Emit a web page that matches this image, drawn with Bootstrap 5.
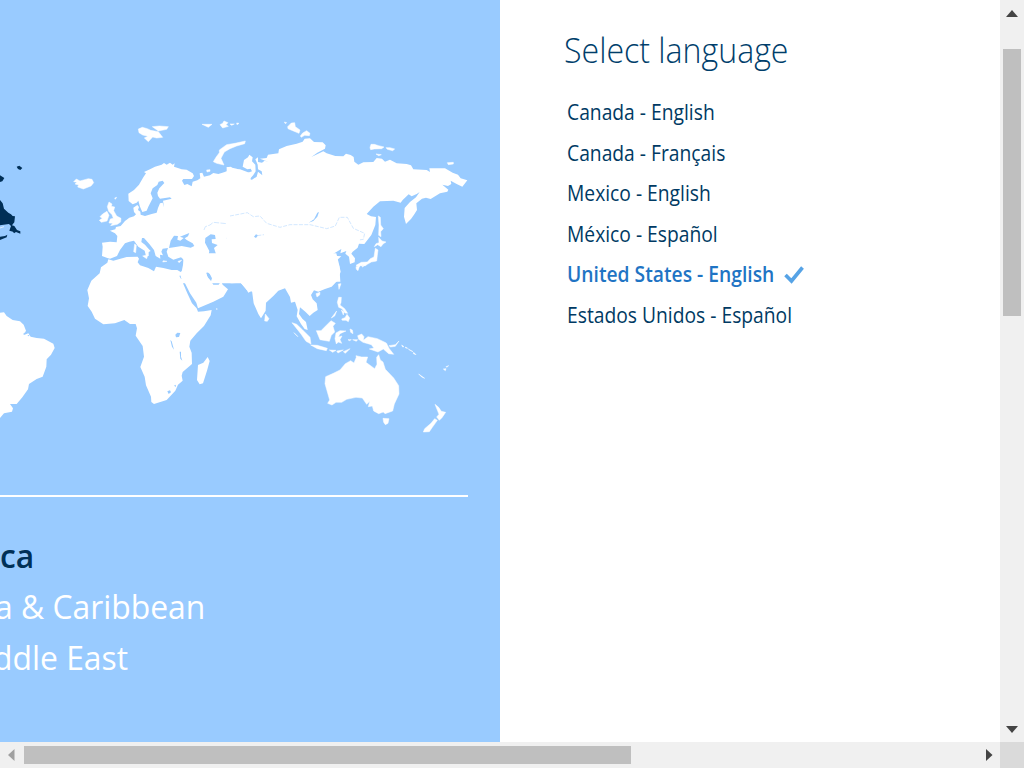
<!DOCTYPE html>
<html lang="en">
<head>
<meta charset="utf-8">
<meta name="viewport" content="width=device-width, initial-scale=1">
<title>Select language</title>
<link href="https://cdn.jsdelivr.net/npm/bootstrap@5.3.0/dist/css/bootstrap.min.css" rel="stylesheet">
<style>
body{font-family:"Open Sans","Noto Sans",sans-serif;color:#003057;height:768px;width:1024px}
.region-pane{width:500px;background:#99cbff;padding-top:110px}
.world-map{width:500px;height:330px}
.rule-line{width:468px;height:2px;background:#fff;margin-top:55px}
.region-list{margin-top:33px;font-size:33px;line-height:51px;color:#fff;white-space:nowrap}
.region-list li{height:51px}
.region-list .fit{transform:scaleX(.965)}
.r1{color:#003057}
.r2{margin-left:-5.3px}
.r3{margin-left:-7px}
.fit{display:inline-block;transform-origin:0 50%;white-space:nowrap}
.lang-pane{padding:25px 0 0 64px}
.lang-title{font-size:35.5px;font-weight:300;line-height:48px;color:#003e6b}
.lang-title .fit{transform:scaleX(.904)}
.lang-list{margin:19px 0 0 2.7px;font-size:21px;line-height:40.6px;color:#003a63}
.lang-list li{height:40.6px}
.lang-list .fit{transform:scaleX(.917)}
.lang-list .chosen{color:#1f74c4;font-weight:600}
.check-mark{margin-left:-9px}
.vbar{width:24px;background:#f0f0f0}
.hbar{height:26px;background:#f0f0f0}
.vthumb{width:18px;height:267px;background:#bfbfbf}
.hthumb{width:607px;height:18px;background:#bfbfbf}
.corner{width:24px;background:#dadada}
</style>
</head>
<body class="d-flex flex-column overflow-hidden">
<div class="d-flex flex-grow-1 overflow-hidden">
 <section class="region-pane overflow-hidden flex-shrink-0">
  <svg class="world-map d-block" viewBox="0 0 500 330" fill="#fff" aria-hidden="true">
   <!-- Europe and the north Atlantic -->
   <g transform="scale(.33333)">
    <path d="M306 398L330 395 350 397 352 378 345 370 330 362 346 358 348 351 362 348 375 333 388 323 402 319 408 313 402 306 400 293 412 285 417 291 414 300 421 305 422 314 435 318 455 312 470 308 474 294 480 280 488 278 492 292 489 272 515 266 510 262 480 266 474 258 472 248 478 235 493 219 488 212 476 215 472 225 458 235 452 250 458 265 445 290 440 302 427 306 420 290 415 272 410 278 398 283 386 273 385 251 402 240 417 224 430 202 438 190 432 186 450 178 465 170 485 164 492 159 500 164 510 158 518 164 524 160 522 170 545 178 560 179 578 190 582 198 576 207 550 207 546 212 553 225 562 222 575 229 578 215 592 211 601 205 599 190 607 188 612 200 630 196 640 189 655 192 672 187 684 182 680 172 692 170 702 178 720 178 752 190V520H538L552 450 543 442 520 449 505 440 500 425 504 414 488 416 484 425 489 436 480 434 481 446 467 438 462 420 448 402 432 384 426 384 424 396 435 404 444 415 452 423 446 426 446 438 438 438 434 422 415 410 402 392 388 395 375 400 360 420 351 438 330 446 322 444 306 438 308 410Z"/>
    <path stroke="#fff" stroke-width="1.500" d="M327 276L336 282 334 289 344 291 341 302 350 318 363 325 362 336 352 343 332 347 338 340 327 339 331 327 340 325 336 314 326 304 322 290ZM308 312L321 304 327 316 321 333 304 337 298 331 307 325 300 320ZM221 215L229 207 240 213 265 206 276 208 281 218 273 228 250 237 233 231 236 225 225 222 231 217ZM415 57L427 52 442 56 452 61 475 65 488 82 470 84 458 81 445 95 433 84 444 79 428 75 417 68ZM457 50L478 48 505 50 500 58 475 63ZM606 43H636L625 52ZM660 44L668 40 672 33 684 38 678 44 685 49 668 54ZM690 42H703L695 46ZM710 39L717 40 711 44ZM640 155L648 142 658 128 658 120 680 104 705 100 736 93 734 101 710 108 690 116 673 126 663 145 672 165 650 160ZM620 180L630 179 630 184 621 186ZM404 402L409 406 407 428 401 425ZM428 438L444 434 440 446ZM490 452L501 454 488 456ZM534 454L545 451 537 458ZM344 264L350 262 346 268Z"/>
    <g fill="#99cbff"><path d="M507 414L512 392 522 377 534 378 532 389 541 392 551 384 540 380 568 369 564 379 554 385 560 390 578 400 583 408 572 413 545 408 522 412ZM616 384L632 373 645 375 647 387 635 388 636 399 653 405 642 414 650 438 640 446 625 438 628 423 615 398ZM680 384L687 378 691 387 683 393ZM618 488L627 487 636 505 633 514 624 505ZM527 487L533 488 545 506 538 504ZM370 422L377 423 374 427ZM550 498L552 486 554 497Z"/><path fill="none" stroke="#bcdcff" stroke-width="2" stroke-dasharray="16 4" d="M612 360L616 350 630 345 640 337 690 342 697 318 710 322 750 306M660 434L676 437 700 450"/></g>
    <g fill="#002f57"><path d="M0 270L8 280 12 296 25 308 33 313 38 318 45 319 43 337 36 346 43 348 51 360 61 364 61 371 48 366 42 370 39 365 28 362 33 348 27 342 0 346ZM0 196L13 204 7 214 0 216ZM50 170L58 167 67 174 61 180 54 177ZM0 380L15 378 22 374 20 382 0 390Z"/></g>
    <path fill="none" stroke="#fff" stroke-width="2" d="M0 354L12 350"/>
   </g>
   <!-- Northern Asia -->
   <g transform="translate(230) scale(.33333)">
    <path d="M0 172L20 176 50 190 66 184 62 176 52 178 38 170 42 150 54 142 58 134 68 142 66 154 76 164 77 184 70 195 62 204 52 207 66 209 80 200 84 185 97 196 95 184 84 178 83 164 76 148 84 142 84 156 96 158 104 152 116 156 90 146 110 144 114 134 145 130 147 118 170 108 200 101 218 95 224 86 240 85 252 96 278 97 287 106 285 116 262 128 244 141 280 124 290 130 316 138 340 139 348 131 362 135 371 141 373 155 385 164 400 157 430 156 440 144 456 146 465 155 480 149 500 160 530 162 543 166 550 178 590 180 600 186 598 175 645 175 668 188 684 194 692 205 712 211 697 230 680 222 662 212 664 222 654 228 637 224 655 239 652 245 630 250 602 267 588 263 576 266 559 280 561 300 552 314 543 327 528 342 522 320 524 294 540 276 558 262 569 246 560 252 545 259 536 253 518 270 512 278 490 272 450 274 430 290 410 312 423 319 438 321 436 345 424 375 403 402 387 401 383 413 368 425 364 431 375 445 374 457 360 462 357 440 346 431 349 423 331 430 334 417 309 432 322 438 334 439 318 453 328 468 331 515H-10V172Z"/>
    <path stroke="#fff" stroke-width="1.500" d="M173 50L184 39 194 38 196 50 210 60 207 70 188 62 174 56ZM211 78L218 69 230 62 240 70 238 77 224 76 214 82ZM163 36L170 38 166 41ZM420 113L423 103 433 103 446 107 462 111 455 116 433 117 422 119ZM468 113L480 113 494 117 488 122 472 118ZM438 132L454 134 446 137ZM652 158L670 157 670 162 655 164ZM445 318L451 322 452 345 460 356 452 365 453 380 446 376 447 345ZM446 382L456 393 468 396 459 402 453 410 443 404 433 410 438 401 447 398ZM436 415L444 420 442 436 440 453 424 456 412 463 405 468 399 464 390 468 386 472 378 466 394 457 412 456 421 446 432 441ZM378 470L389 467 384 482 379 478ZM393 466L405 465 398 471Z"/>
    <path fill="#99cbff" d="M236 338L252 328 262 308 267 306 262 320 250 333ZM72 380L78 373 84 376 78 384Z"/>
    <path fill="none" stroke="#bcdcff" stroke-width="2" stroke-dasharray="12 4" d="M0 318L52 308 70 320 90 318 110 340 150 352 180 344 240 344 290 356 316 348 328 322 352 322 370 355 404 370 400 388 386 390M82 377L102 374"/>
   </g>
   <!-- Africa, Arabia and eastern South America -->
   <g transform="translate(0 130) scale(.33333)">
    <path d="M325 58L340 62 380 51 413 50 417 56 413 67 420 76 445 84 462 94 468 80 490 84 515 90 532 90 542 96 550 90V40H760V156L740 150 722 128 695 130 664 126 661 119 642 121 633 104 622 96 618 98 622 110 632 122 640 134 656 134 663 124 668 134 684 148 670 170 640 185 594 205 589 188 570 160 552 124 543 107 538 107 550 132 562 160 576 190 590 205 594 215 612 214 635 210 632 226 612 258 590 280 571 302 568 320 575 338 576 372 548 396 545 407 548 422 534 434 526 452 500 480 462 492 454 486 453 470 438 436 434 410 421 381 432 350 428 318 407 287 411 265 407 252 390 252 373 240 345 250 310 253 285 236 275 215 263 198 267 175 262 150 274 122 299 100 303 82 322 68Z"/>
    <path d="M623 351L629 363 621 392 609 430 599 433 591 420 594 375 610 368ZM648 205L654 207 649 209ZM0 218L12 217 20 228 38 240 60 244 71 254 78 272 72 285 85 280 92 290 110 294 132 296 160 311 164 324 153 344 140 358 139 380 128 410 110 417 87 432 84 448 67 472 50 492 30 492 39 505 36 515 12 520 0 534Z"/>
    <path fill="#99cbff" d="M526 284L532 278 541 279 537 291 528 292ZM511 300L515 304 522 329 516 320ZM539 335L543 335 543 350 547 362 541 356ZM502 454L510 451 513 457 506 462ZM522 437L527 434 528 441ZM70 281L79 274 72 286ZM82 287L90 283 86 289Z"/>
    <path fill="none" stroke="#cfe6ff" stroke-width="2" d="M694 102L704 118"/>
   </g>
   <!-- South-east Asia and Oceania -->
   <g transform="translate(230 130) scale(.33333)" stroke="#fff" stroke-width="1.500">
    <path d="M-5 40H319L327 72 332 95 322 122 305 140 285 147 265 155 252 151 243 165 248 178 260 190 263 210 250 218 239 228 226 215 210 202 207 222 217 236 228 246 233 270 224 267 213 252 200 229 203 210 195 185 183 188 180 171 165 145 145 152 130 168 108 188 107 212 93 235 85 222 71 190 66 152 55 158 48 146 32 128H-5Z" stroke="none"/>
    <path d="M106 222L117 236 112 244 104 243ZM258 161L270 157 269 165 261 171ZM325 132L333 131 327 148ZM326 172L334 172 333 188 330 195 344 206 353 220 345 219 336 206 326 202 322 187ZM334 210L342 216 340 225ZM335 237L345 233 351 223 359 234 355 245 348 241 337 241ZM304 234L320 213 314 228ZM186 248L200 253 218 270 240 292 243 312 228 304 213 282ZM259 272L273 272 287 258 303 242 316 250 309 259 314 276 304 286 298 304 270 299ZM242 315L262 316 292 325 289 332 262 326ZM298 330L318 331 308 337ZM320 333L340 330 324 339ZM340 335L360 326 346 340ZM318 279L330 272 348 273 330 281 325 291 336 288 330 299 335 310 325 306 319 312 315 296ZM360 267L367 270 369 281 362 277ZM354 299L364 299 358 302ZM368 299L383 299 379 304ZM383 287L395 282 402 290 400 301 414 290 442 296 469 309 478 326 491 343 476 341 460 327 444 336 418 327 432 324 424 314 399 307 386 298ZM477 317L496 314 507 303 496 319 482 321ZM515 315L522 320 518 321ZM526 321L533 325 527 324ZM535 327L549 335 540 331ZM551 337L558 344 550 341ZM566 402L584 415 575 411ZM640 387L648 386 646 392ZM648 380L656 377 650 382ZM192 278L204 290 198 285Z"/>
    <path d="M287 410L310 400 330 390 346 371 362 362 372 369 379 352 378 347 395 351 413 351 408 367 434 386 441 373 440 352 446 344 451 360 459 366 466 388 491 414 506 437 507 462 493 492 488 513 465 521 460 516 446 521 431 513 427 498 415 500 419 484 410 493 397 474 378 472 350 478 335 487 318 487 306 495 293 490 299 480 285 431ZM459 535L477 536 474 550 466 554 461 547ZM615 493L626 502 634 514 647 517 636 533 628 541 620 531 627 523ZM614 536L622 541 607 562 598 575 580 576 584 566 603 550Z"/>
   </g>
  </svg>
  <div class="rule-line"></div>
  <ul class="region-list list-unstyled mb-0">
   <li><span class="fit r1 fw-semibold">ca</span></li>
   <li><span class="fit r2">a &amp; Caribbean</span></li>
   <li><span class="fit r3">ddle East</span></li>
  </ul>
 </section>
 <main class="lang-pane flex-grow-1 bg-white">
  <h1 class="lang-title mb-0"><span class="fit">Select language</span></h1>
  <ul class="lang-list list-unstyled mb-0">
   <li><span class="fit">Canada - English</span></li>
   <li><span class="fit">Canada - Français</span></li>
   <li><span class="fit">Mexico - English</span></li>
   <li><span class="fit">México - Español</span></li>
   <li class="chosen d-flex align-items-center"><span class="fit">United States - English</span>
    <svg class="check-mark" width="20" height="18" viewBox="0 0 20 18" fill="none" stroke="#56a3e6" stroke-width="3.600" aria-hidden="true"><path d="M1.500 9L7.500 15 18.500 1.500"/></svg></li>
   <li><span class="fit">Estados Unidos - Español</span></li>
  </ul>
 </main>
 <div class="vbar d-flex flex-column align-items-center flex-shrink-0">
  <svg width="24" height="49" aria-hidden="true"><path fill="#444" d="M12 10L18 17H6Z"/></svg>
  <div class="vthumb"></div>
  <svg class="mt-auto" width="24" height="20" aria-hidden="true"><path fill="#444" d="M6 4H18L12 11Z"/></svg>
 </div>
</div>
<div class="hbar d-flex align-items-center flex-shrink-0">
 <svg width="24" height="26" aria-hidden="true"><path fill="#a0a0a0" d="M14.500 7V19L8 13Z"/></svg>
 <div class="hthumb"></div>
 <svg class="ms-auto" width="20" height="26" aria-hidden="true"><path fill="#444" d="M6 7L12.500 13 6 19Z"/></svg>
 <div class="corner align-self-stretch"></div>
</div>
<script src="https://cdn.jsdelivr.net/npm/bootstrap@5.3.0/dist/js/bootstrap.bundle.min.js"></script>
</body>
</html>
